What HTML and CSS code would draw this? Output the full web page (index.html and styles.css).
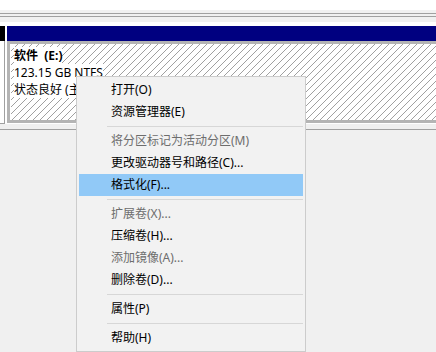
FILE: index.html
```html
<!DOCTYPE html>
<html lang="zh-CN">
<head>
    <meta charset="UTF-8">
    <title>磁盘管理</title>
    <link rel="stylesheet" href="styles.css">
</head>
<body>

    <div class="pane-top"></div>
    <div class="splitter">
        <div class="split-line"></div>
        <div class="split-gap"></div>
        <div class="split-line"></div>
        <div class="split-rest"></div>
    </div>

    <div class="disk-row">
        <div class="disk-stub">
            <div class="stub-head"></div>
            <div class="stub-body"></div>
        </div>
        <div class="partition">
            <div class="part-head"></div>
            <div class="part-body">
                <div class="part-info">
                    <span class="label bold">软件  (E:)</span>
                    <span class="label">123.15 GB NTFS</span>
                    <span class="label">状态良好 (主分区)</span>
                </div>
            </div>
        </div>
    </div>

    <div class="disk-gap"></div>
    <div class="lower"></div>

    <!-- context menu over the volume -->
    <ul class="menu">
        <li class="item">打开(O)</li>
        <li class="item">资源管理器(E)</li>
        <li class="sep"></li>
        <li class="item disabled">将分区标记为活动分区(M)</li>
        <li class="item">更改驱动器号和路径(C)...</li>
        <li class="item active">格式化(F)...</li>
        <li class="sep"></li>
        <li class="item disabled">扩展卷(X)...</li>
        <li class="item">压缩卷(H)...</li>
        <li class="item disabled">添加镜像(A)...</li>
        <li class="item">删除卷(D)...</li>
        <li class="sep"></li>
        <li class="item">属性(P)</li>
        <li class="sep"></li>
        <li class="item">帮助(H)</li>
    </ul>

</body>
</html>
```

FILE: styles.css
```css
html, body {
    margin: 0;
    padding: 0;
}
body {
    width: 436px;
    height: 352px;
    overflow: hidden;
    position: relative;
    background-color: #f0f0f0;
    font-family: "Noto Sans", "Noto Sans CJK SC", sans-serif;
    font-size: 12px;
    color: #000;
}
.pane-top {
    height: 10px;
    background-color: #fff;
}
.splitter {
    height: 16px;
    padding-top: 3px;
    box-sizing: border-box;
}
.split-line {
    height: 1px;
    background-color: #a0a0a0;
}
.split-gap {
    height: 2px;
}
.split-rest {
    height: 5px;
    margin-top: 0;
    border-bottom: 4px solid #fff;
}
.disk-row {
    display: flex;
    background-color: #fff;
}
.disk-stub {
    width: 5px;
    margin-right: 2px;
}
.stub-head {
    height: 15px;
    background-color: #000;
}
.stub-body {
    height: 82px;
    border-right: 1px solid #a0a0a0;
    border-bottom: 1px solid #a0a0a0;
    background-color: #fff;
}
.partition {
    flex: 1;
}
.part-head {
    height: 15px;
    background-color: #000080;
}
.part-body {
    height: 76px;
    border: 3px solid #b4b4b4;
    border-right: none;
    padding: 0 0 0 1px;
    background-color: #fff;
}
.part-info {
    height: 100%;
    padding: 3px 0 0 3px;
    box-sizing: border-box;
    display: flex;
    flex-direction: column;
    align-items: flex-start;
    background-image: url("data:image/svg+xml,%3Csvg xmlns='http://www.w3.org/2000/svg' width='7' height='7' shape-rendering='crispEdges'%3E%3Cpath d='M6 0h1v1H6zM5 1h1v1H5zM4 2h1v1H4zM3 3h1v1H3zM2 4h1v1H2zM1 5h1v1H1zM0 6h1v1H0z' fill='%23a0a0a0'/%3E%3C/svg%3E");
}
.label {
    background-color: #fff;
    line-height: 17px;
    white-space: pre;
}
.bold {
    font-weight: bold;
}
.disk-gap {
    height: 5px;
    border-bottom: 1px solid #a0a0a0;
}
.lower {
    height: 200px;
}
.menu {
    position: absolute;
    left: 76px;
    top: 76px;
    width: 230px;
    margin: 0;
    padding: 2px;
    box-sizing: border-box;
    list-style: none;
    background-color: #f2f2f2;
    border: 1px solid #cccccc;
}
.item {
    height: 22px;
    line-height: 22px;
    padding-left: 32px;
    white-space: nowrap;
}
.item.disabled {
    color: #6d6d6d;
}
.item.active {
    background-color: #91c9f7;
}
.sep {
    height: 1px;
    margin: 3px 0 3px 28px;
    background-color: #d7d7d7;
}
```
